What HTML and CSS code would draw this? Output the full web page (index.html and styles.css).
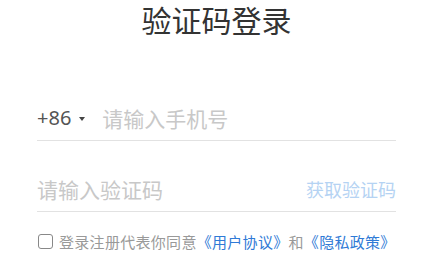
FILE: index.html
```html
<!DOCTYPE html>
<html lang="zh-CN">
<head>
    <meta charset="UTF-8">
    <meta name="viewport" content="width=device-width, initial-scale=1.0">
    <title>验证码登录</title>
    <link rel="stylesheet" href="styles.css">
</head>
<body>
    <div class="login">
        <h1 class="title">验证码登录</h1>

        <div class="fields">
            <div class="field">
                <div class="area-code">
                    <span>+86</span>
                    <span class="caret"></span>
                </div>
                <input type="tel" class="field-input" placeholder="请输入手机号">
            </div>

            <div class="field">
                <input type="text" class="field-input" placeholder="请输入验证码">
                <span class="send-code">获取验证码</span>
            </div>
        </div>

        <label class="agree">
            <input type="checkbox" class="agree-box">
            <span>登录注册代表你同意<a href="#">《用户协议》</a>和<a href="#">《隐私政策》</a></span>
        </label>
    </div>
</body>
</html>
```

FILE: styles.css
```css
:root {
    --text-color: #333333;
    --muted: #999999;
    --placeholder: #c8c8c8;
    --line: #e2e2e2;
    --link: #2f7ad6;
    --link-light: #b5d3f3;
}

* {
    box-sizing: border-box;
}

body {
    margin: 0;
    font-family: 'Noto Sans CJK SC', 'Noto Sans', sans-serif;
    background: #ffffff;
    color: var(--text-color);
}

.login {
    padding: 0 37px;
}

.title {
    margin: 0;
    padding-top: 1px;
    line-height: 36px;
    text-align: center;
    font-size: 30px;
    font-weight: 400;
    color: var(--text-color);
}

.fields {
    margin-top: 33px;
}

.field {
    display: flex;
    align-items: flex-end;
    height: 71px;
    padding-bottom: 7px;
    border-bottom: 1px solid var(--line);
}

.area-code {
    display: flex;
    align-items: center;
    gap: 8px;
    margin-right: 17px;
    line-height: 30px;
    font-family: 'Noto Sans', sans-serif;
    font-size: 20px;
    color: #555555;
}

.caret {
    width: 0;
    height: 0;
    border-left: 3px solid transparent;
    border-right: 3px solid transparent;
    border-top: 4px solid #444444;
    margin-top: 1px;
}

.field-input {
    flex: 1;
    min-width: 0;
    height: 30px;
    border: none;
    outline: none;
    padding: 0;
    font-family: inherit;
    font-size: 21px;
    line-height: 30px;
    color: var(--text-color);
    background: transparent;
}

.field-input::placeholder {
    color: var(--placeholder);
}

.send-code {
    line-height: 30px;
    font-size: 18px;
    color: var(--link-light);
}

.agree {
    display: flex;
    align-items: center;
    gap: 6px;
    margin-top: 19px;
    font-size: 15px;
    letter-spacing: 0.3px;
    color: var(--muted);
}

.agree a {
    color: var(--link);
    text-decoration: none;
}

.agree-box {
    appearance: none;
    -webkit-appearance: none;
    width: 15px;
    height: 15px;
    margin: 0 0 0 1px;
    border: 1px solid #888888;
    border-radius: 3px;
}
```
